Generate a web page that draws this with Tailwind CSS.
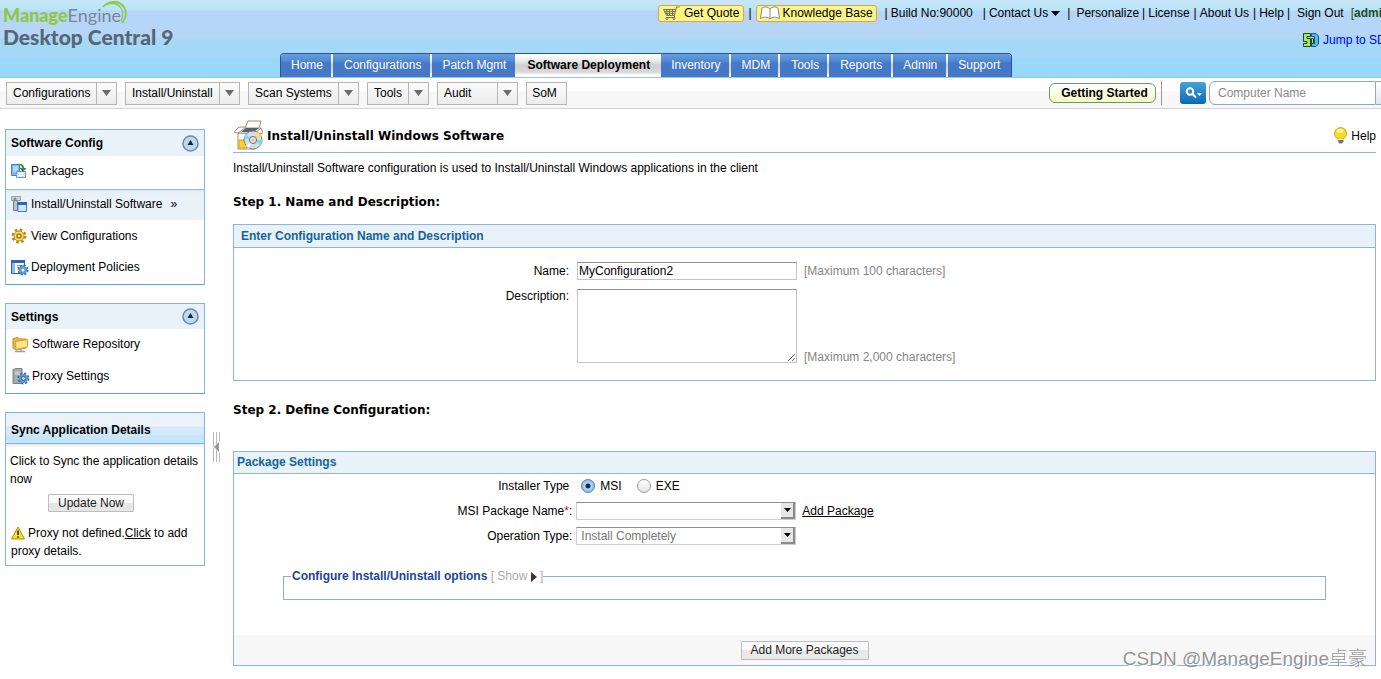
<!DOCTYPE html>
<html lang="en">
<head>
<meta charset="utf-8">
<title>Desktop Central 9 - Install/Uninstall Windows Software</title>
<script src="https://cdn.jsdelivr.net/npm/@tailwindcss/browser@4"></script>
</head>
<body class="relative min-h-screen overflow-x-hidden bg-white font-['Liberation_Sans',Arial,sans-serif] text-[12px] leading-[18px] text-black">

<header class="flex h-[78px] flex-col justify-between border-b border-[#90c6f8] bg-[linear-gradient(to_bottom,#c8e6fa_0px,#c4e6fa_4px,#b8e8f8_6px,#b8e6f8_10px,#b5d6f7_11px,#b5d6f7_37px,#a6d8f8_39px,#a4d8f8_58px,#98d8f8_60px,#98d8f8_78px)]">
  <div class="flex justify-between">
    <a href="#" class="relative flex flex-col pt-[7px] pl-[3px] font-['Lato','Open_Sans',sans-serif]">
      <span class="text-[18px] leading-[17px] text-[#7b8794]"><b class="font-black text-[#8fc742]">Manage</b>Engine</span>
      <span class="text-[21px] leading-[25px] font-black text-[#566672]">Desktop Central 9</span>
      <svg class="absolute top-0 left-[102px]" width="26" height="25" viewBox="0 0 26 25" fill="none" stroke="#8fc742"><path d="M1 7C7 0 18 0 22 7c3 5 2 11-2 16" stroke-width="1.600"/><path d="M4 5c7-4 14 0 16 5 1 3 1 7-1 11" stroke-width="1.200"/><path d="M8 3c8-2 15 3 16 9" stroke-width="1"/></svg>
    </a>
    <div class="w-[723px] overflow-hidden whitespace-nowrap">
      <nav class="flex h-[26px] items-center" aria-label="Account">
        <a href="#" class="flex h-[17px] items-center gap-1 rounded-[3px] border border-[#e0a050] bg-[#fbf588] pr-1 pl-1">
          <svg width="17" height="14" viewBox="0 0 17 14" fill="none" stroke="#77764a"><path d="M16.500 1h-3l-2 8.500h-8L.5 3.500h12M1.500 5.500h10.500M2.500 7.500h9M3.500 3.500l1 6M6.500 3.500v6M9.500 3.500v6M11 9.500l1 2H3"/><circle cx="4" cy="12.500" r="1"/><circle cx="11" cy="12.500" r="1"/></svg>Get Quote</a>
        <span class="px-1">|</span>
        <a href="#" class="flex h-[17px] items-center gap-[3px] rounded-[3px] border border-[#e0a050] bg-[#fbf588] px-[3px]">
          <svg width="20" height="14" viewBox="0 0 20 14" fill="#fff" stroke="#7f8c90"><path d="M10 3C8 .5 4 .5 2 2L.5 12.500C4 10.500 8 11 10 13c2-2 6-2.500 9.500-.5L18 2c-2-1.500-6-1.500-8 1zv10"/></svg>Knowledge Base</a>
        <span class="pr-[3px] pl-2">|</span><span>Build No:90000</span>
        <span class="pr-[3px] pl-[10px]">|</span>
        <a href="#" class="flex items-center gap-[3px]">Contact Us <svg width="9" height="5" viewBox="0 0 9 5"><path d="M0 0h9L4.500 5z"/></svg></a>
        <span class="pr-[6px] pl-[7px]">|</span><a href="#">Personalize</a>
        <span class="px-[3px]">|</span><a href="#">License</a>
        <span class="pr-[3px] pl-1">|</span><a href="#">About Us</a>
        <span class="pr-[3px] pl-1">|</span><a href="#">Help</a>
        <span class="pr-[7px] pl-[3px]">|</span><a href="#">Sign Out</a>
        <span class="pl-[7px] text-[#1d4d24]">[<b>admin</b>]</span>
      </nav>
      <a href="#" class="mt-[5px] ml-[645px] flex items-center gap-1 text-[#0000ee]">
        <svg class="shrink-0" width="16" height="14" viewBox="0 0 16 14"><path d="M.5.5h7v3H4v2h3.500v8h-7v-3H4v-2H.5z" fill="#b8e35c" stroke="#174b28"/><path d="M8.500.5H13l2.500 2.500v8L13 13.500H8.500v-3h3v-7h-3z" fill="#55b8f0" stroke="#1c4f86"/><path d="M8.500 5.500h2v5h-2z" fill="#b8e35c" stroke="#174b28"/></svg>Jump to SDP</a>
    </div>
  </div>
  <nav class="ml-[280px] flex h-6 w-fit gap-[2px] overflow-hidden rounded-t-[4px] border-x border-t border-[#2a559c] bg-[linear-gradient(to_bottom,#fff_0px,#ececec_7px,#cfcfcf_11px,#d8d8d8_18px,#fff_21px)] leading-[22px] whitespace-nowrap text-white" aria-label="Modules">
    <a href="#" class="bg-[linear-gradient(to_bottom,#689fe0_0px,#5088d4_7px,#4678c8_9px)] px-2 pl-[10px]">Home</a>
    <a href="#" class="bg-[linear-gradient(to_bottom,#689fe0_0px,#5088d4_7px,#4678c8_9px)] pr-[9px] pl-[11px]">Configurations</a>
    <a href="#" class="bg-[linear-gradient(to_bottom,#689fe0_0px,#5088d4_7px,#4678c8_9px)] pr-[9px] pl-[10px]">Patch Mgmt</a>
    <a href="#" class="pr-[9px] pl-[10px] font-bold text-black">Software Deployment</a>
    <a href="#" class="bg-[linear-gradient(to_bottom,#689fe0_0px,#5088d4_7px,#4678c8_9px)] pr-2 pl-[10px]">Inventory</a>
    <a href="#" class="bg-[linear-gradient(to_bottom,#689fe0_0px,#5088d4_7px,#4678c8_9px)] pr-2 pl-[11px]">MDM</a>
    <a href="#" class="bg-[linear-gradient(to_bottom,#689fe0_0px,#5088d4_7px,#4678c8_9px)] pr-2 pl-[11px]">Tools</a>
    <a href="#" class="bg-[linear-gradient(to_bottom,#689fe0_0px,#5088d4_7px,#4678c8_9px)] pr-[9px] pl-[11px]">Reports</a>
    <a href="#" class="bg-[linear-gradient(to_bottom,#689fe0_0px,#5088d4_7px,#4678c8_9px)] pr-[9px] pl-[10px]">Admin</a>
    <a href="#" class="bg-[linear-gradient(to_bottom,#689fe0_0px,#5088d4_7px,#4678c8_9px)] pr-[11px] pl-[10px]">Support</a>
  </nav>
</header>

<div class="flex h-[31px] items-center overflow-hidden border-b border-[#d4d4d4] bg-[linear-gradient(to_bottom,#fff_0px,#fff_13px,#f7f7f7_14px)] pl-[6px] whitespace-nowrap">
  <div class="flex h-[23px] gap-2 leading-[21px]">
    <button class="flex w-[111px] border border-[#b5b5b5] bg-linear-to-b from-[#fbfbfb] to-[#ececec]"><span class="grow pl-[6px] text-left">Configurations</span><span class="flex h-full w-5 items-center justify-center border-l border-[#b5b5b5]"><svg width="9" height="6" viewBox="0 0 9 6" fill="#6b6b6b"><path d="M0 0h9L4.500 6z"/></svg></span></button>
    <button class="flex w-[115px] border border-[#b5b5b5] bg-linear-to-b from-[#fbfbfb] to-[#ececec]"><span class="grow pl-[6px] text-left">Install/Uninstall</span><span class="flex h-full w-5 items-center justify-center border-l border-[#b5b5b5]"><svg width="9" height="6" viewBox="0 0 9 6" fill="#6b6b6b"><path d="M0 0h9L4.500 6z"/></svg></span></button>
    <button class="flex w-[111px] border border-[#b5b5b5] bg-linear-to-b from-[#fbfbfb] to-[#ececec]"><span class="grow pl-[6px] text-left">Scan Systems</span><span class="flex h-full w-5 items-center justify-center border-l border-[#b5b5b5]"><svg width="9" height="6" viewBox="0 0 9 6" fill="#6b6b6b"><path d="M0 0h9L4.500 6z"/></svg></span></button>
    <button class="flex w-[62px] border border-[#b5b5b5] bg-linear-to-b from-[#fbfbfb] to-[#ececec]"><span class="grow pl-[6px] text-left">Tools</span><span class="flex h-full w-5 items-center justify-center border-l border-[#b5b5b5]"><svg width="9" height="6" viewBox="0 0 9 6" fill="#6b6b6b"><path d="M0 0h9L4.500 6z"/></svg></span></button>
    <button class="flex w-[81px] border border-[#b5b5b5] bg-linear-to-b from-[#fbfbfb] to-[#ececec]"><span class="grow pl-[6px] text-left">Audit</span><span class="flex h-full w-5 items-center justify-center border-l border-[#b5b5b5]"><svg width="9" height="6" viewBox="0 0 9 6" fill="#6b6b6b"><path d="M0 0h9L4.500 6z"/></svg></span></button>
    <button class="w-[41px] border border-[#b5b5b5] bg-linear-to-b from-[#fbfbfb] to-[#ececec] pr-1">SoM</button>
  </div>
  <div class="ml-auto flex items-center">
    <button class="h-5 w-[107px] rounded-[6px] border border-[#5f9f68] bg-linear-to-b from-white to-[#fbf7c4] pl-1 font-bold">Getting Started</button>
    <span class="ml-[5px] h-6 border-l border-[#999]"></span>
    <button class="ml-[18px] flex h-[22px] w-[26px] items-center justify-center rounded-[3px] bg-linear-to-b from-[#45a3dc] to-[#0868b4]" aria-label="Search type"><svg width="17" height="12" viewBox="0 0 17 12" fill="none" stroke="#fff" stroke-width="2"><circle cx="5" cy="4.500" r="3.200"/><path d="M7.500 7l3.500 3.500"/><path d="M12 6h5L14.500 9z" fill="#fff" stroke="none"/></svg></button>
    <input type="text" aria-label="Computer Name" placeholder="Computer Name" class="ml-[3px] h-6 w-[167px] rounded-l-[6px] border border-[#8ba6c6] bg-white px-2 placeholder:text-[#8a8a8a]">
    <button class="h-6 w-[5px] border-y border-[#8ba6c6] bg-linear-to-b from-white to-[#dde5ee]" aria-label="Search"></button>
  </div>
</div>

<div class="flex items-start pr-[5px] pb-3 pl-[5px]">
  <aside class="mt-5 w-[200px] shrink-0">
    <section class="h-[156px] border border-[#7fb4e4] border-b-[#5aa6e0]">
      <h2 class="flex h-[26px] items-center justify-between bg-[#eaf2f9] px-[5px] font-bold">Software Config
        <button aria-label="Collapse Software Config"><svg width="17" height="17" viewBox="0 0 17 17"><circle cx="8.500" cy="8.500" r="7.500" fill="#b5dcf0" stroke="#7786a8" stroke-width="1.500"/><path d="M8.500 5l3 5h-6z" fill="#222"/></svg></button></h2>
      <a href="#" class="flex h-[30px] items-center gap-1 pl-[5px]"><svg width="16" height="16" viewBox="0 0 16 16"><path d="M.5 1.500h8v11h-8z" fill="#7fb5e6" stroke="#4d7ebd"/><path d="M2 4h5M2 6h5M2 8h4" stroke="#e8f3ff"/><path d="M5.500 8.500h9v6h-9z" fill="#cfe3f7" stroke="#6b9bd0"/><path d="M7 10.500h6M7 12.500h6M10 9v5" stroke="#fff"/><path d="M7 1c4-1 6 1 6 4h2.500L12 9 8.500 5H11c0-2-1-3-4-4z" fill="#2f8f2a"/></svg>Packages</a>
      <a href="#" aria-current="page" class="mt-[3px] flex h-[31px] items-center gap-1 border-t border-[#8fbbe6] bg-[linear-gradient(to_bottom,#dde4f4_0px,#eaf2f9_3px)] pb-[2px] pl-[5px]"><svg width="16" height="16" viewBox="0 0 16 16"><path d="M.5.5h9v4h-9z" fill="#d4d4d8" stroke="#9da1ae"/><path d="M2.500 4.500h4v10h-4z" fill="#b9c2d2" stroke="#70809c"/><circle cx="4" cy="3" r="1.500" fill="#6fa46b"/><path d="M7 6.500h8.500v9H7z" fill="#d4e6fa" stroke="#4a7dbd"/><path d="M6.500 6h9.500v3H6.500z" fill="#2d66b8"/></svg>Install/Uninstall Software <span class="pl-1">»</span></a>
      <a href="#" class="flex h-[31px] items-center gap-1 pl-[5px]"><svg width="16" height="16" viewBox="0 0 16 16"><circle cx="8" cy="8" r="6" fill="none" stroke="#b98516" stroke-width="3" stroke-dasharray="2.400 2.310"/><circle cx="8" cy="8" r="5" fill="#ffe065" stroke="#c18f1c"/><circle cx="8" cy="8" r="2" fill="#fff" stroke="#a1730c" stroke-width="1.500"/></svg>View Configurations</a>
      <a href="#" class="flex h-8 items-center gap-[2px] pl-[5px]"><svg width="18" height="17" viewBox="0 0 18 17"><path d="M.5 1.500h13v13H.5z" fill="#fff" stroke="#2d61aa"/><path d="M0 1h14v3H0z" fill="#2d66b8"/><path d="M1 4h3v10H1z" fill="#8cbdf0"/><path d="M6 6.500h7M6 8.500h7" stroke="#9ab"/><circle cx="12" cy="11" r="4.500" fill="none" stroke="#2e6cb3" stroke-width="2" stroke-dasharray="2 1.530"/><circle cx="12" cy="11" r="4" fill="#5b9bde"/><circle cx="12" cy="11" r="1.500" fill="#fff"/></svg>Deployment Policies</a>
    </section>

    <section class="mt-[18px] h-[91px] border border-[#7fb4e4] border-b-[#5aa6e0]">
      <h2 class="flex h-[25px] items-center justify-between bg-[#eaf2f9] px-[5px] font-bold">Settings
        <button aria-label="Collapse Settings"><svg width="17" height="17" viewBox="0 0 17 17"><circle cx="8.500" cy="8.500" r="7.500" fill="#b5dcf0" stroke="#7786a8" stroke-width="1.500"/><path d="M8.500 5l3 5h-6z" fill="#222"/></svg></button></h2>
      <a href="#" class="flex h-[30px] items-center gap-[3px] pl-[6px]"><svg width="17" height="17" viewBox="0 0 17 17"><path d="M1 2.500L6 1.500l1.500 1.500H14V12L4 14 1 12z" fill="#f0b93a" stroke="#c48d1d"/><path d="M3.500 5.500L15.500 3.500V11L4 13.500z" fill="#ffe58c" stroke="#d3a136"/><path d="M3 15.500h10M9 13v2" stroke="#8ba1bd" stroke-width="1.500"/></svg>Software Repository</a>
      <a href="#" class="flex h-[34px] items-center gap-[2px] pl-[6px]"><svg width="18" height="17" viewBox="0 0 18 17"><path d="M1 1.500L4 .5h6v15H1z" fill="#a4aaa9" stroke="#7d8582"/><path d="M3 4h5M3 6h5" stroke="#dfe3e2"/><circle cx="11.500" cy="10.500" r="5" fill="none" stroke="#2e6cb3" stroke-width="2" stroke-dasharray="2.200 1.720"/><circle cx="11.500" cy="10.500" r="4.500" fill="#5796dc"/><circle cx="11.500" cy="10.500" r="2" fill="#d9ecff" stroke="#2c63ac"/></svg>Proxy Settings</a>
    </section>

    <section class="mt-[18px] h-[154px] border border-[#7fb4e4]">
      <h2 class="flex h-[31px] items-center border-b border-[#7fb4e4] bg-[linear-gradient(to_bottom,#ebf2f9_0px,#ebf2f9_13px,#d8e8fa_14px,#d4e8fa_22px,#c5e5f8_23px)] pt-1 pl-[5px] font-bold">Sync Application Details</h2>
      <div class="bg-[linear-gradient(to_bottom,#e8e8e8_0px,#fff_4px)] pt-2 pl-1">
        <p>Click to Sync the application details now</p>
        <button class="mt-[6px] ml-[38px] block h-[18px] w-[86px] rounded-[1px] border border-[#bdbdbd] bg-[linear-gradient(to_bottom,#fafafa_50%,#e6e6e6_50%)] leading-4 text-[#222]">Update Now</button>
        <p class="mt-3 pl-[1px]"><svg class="mr-[3px] inline-block align-[-3px]" width="14" height="14" viewBox="0 0 14 14"><path d="M7 1l6.500 12H.5z" fill="#ffe11a" stroke="#a89012"/><path d="M7 4.500v4.500M7 10.200v1.600" stroke="#222" stroke-width="1.600"/></svg>Proxy not defined.<a href="#" class="underline">Click</a> to add proxy details.</p>
      </div>
    </section>
  </aside>

  <button class="mt-[323px] ml-2 shrink-0" aria-label="Collapse sidebar"><svg width="8" height="30" viewBox="0 0 8 30"><path d="M.5 0v30M3.500 0v30M6.500 0v30" stroke="#b8b8b8"/><path d="M0 15l7-6v12z" fill="#fff"/><path d="M1 15l5-5v10z" fill="#999"/></svg></button>

  <main class="ml-3 min-w-0 grow">
    <div class="flex h-[44px] items-center justify-between border-b border-[#8cb8e0] pt-[10px]">
      <h1 class="flex items-center gap-1 font-['DejaVu_Sans',Verdana,sans-serif] text-[12px] font-bold"><svg width="30" height="31" viewBox="0 0 30 31"><path d="M5 13v16h17V13z" fill="#fff" stroke="#ad8a72"/><path d="M6 20h8v8H6z" fill="#ffd21e" stroke="#d9a50e"/><path d="M5 13l7-5h16l-6 5zM12 8l3-7h13l-2 7M5 13l-4-1 5-5h6M28 8l2 5-7 1" fill="#fff" stroke="#ad8a72"/><path d="M8 12l5-4h13l-5 4z" fill="#59616b"/><circle cx="20" cy="20" r="9" fill="#d7dbe2" stroke="#7e8696"/><path d="M20 20l-9-2 1-4z" fill="#6fe3f5"/><path d="M20 20l5-8 3 4z" fill="#ffe44c"/><path d="M20 20l9 0-1 5z" fill="#6fe3f5"/><path d="M20 20l-4 8-3-2z" fill="#f6f9ff"/><circle cx="20" cy="20" r="3.500" fill="#f2f2f8" stroke="#5a5f86"/><circle cx="20" cy="20" r="1.500" fill="#ffb830"/></svg>Install/Uninstall Windows Software</h1>
      <a href="#" class="flex items-center gap-1"><svg width="13" height="17" viewBox="0 0 13 17"><circle cx="6.500" cy="6.500" r="6" fill="#fcd91a" stroke="#e0a20c"/><ellipse cx="6" cy="4" rx="3.500" ry="2" fill="#fff6b0"/><path d="M3.500 12.500h6v2l-1.500 2H5z" fill="#777"/><path d="M3.500 12.500h6" stroke="#eee"/></svg>Help</a>
    </div>
    <p class="mt-[6px]">Install/Uninstall Software configuration is used to Install/Uninstall Windows applications in the client</p>

    <h2 class="mt-4 font-['DejaVu_Sans',Verdana,sans-serif] text-[12px] font-bold">Step 1. Name and Description:</h2>
    <section class="mt-[13px] h-[157px] border border-[#8cb4dc]">
      <h3 class="h-[23px] border-b border-[#8cb4dc] bg-[#eaf2f9] pl-[7px] leading-[22px] font-bold text-[#12649a]">Enter Configuration Name and Description</h3>
      <div class="mt-[14px] grid grid-cols-[30%_220px_1fr] gap-y-[9px] pl-[1px]">
        <label for="name" class="pr-2 text-right">Name:</label>
        <input id="name" type="text" value="MyConfiguration2" class="h-[18px] border border-[#c4c4c4] border-t-[#8e8e8e] px-[1px]">
        <span class="pl-[7px] text-[#858585]">[Maximum 100 characters]</span>
        <label for="description" class="-mt-[2px] pr-2 text-right">Description:</label>
        <textarea id="description" class="h-[74px] resize border border-[#c4c4c4] border-t-[#8e8e8e]"></textarea>
        <span class="self-end pl-[7px] leading-3 text-[#858585]">[Maximum 2,000 characters]</span>
      </div>
    </section>

    <h2 class="mt-5 font-['DejaVu_Sans',Verdana,sans-serif] text-[12px] font-bold">Step 2. Define Configuration:</h2>
    <section class="mt-8 border border-[#8cb4dc]">
      <h3 class="h-[22px] border-b border-[#8cb4dc] bg-[#eaf2f9] pl-[3px] leading-[20px] font-bold text-[#12649a]">Package Settings</h3>
      <div class="mt-[3px] grid grid-cols-[30%_220px_1fr] gap-y-[7px]">
        <span class="pr-[7px] text-right" id="installer-type">Installer Type</span>
        <div class="flex items-center gap-[15px] pl-[5px]" role="radiogroup" aria-labelledby="installer-type">
          <label class="flex items-center gap-[5px]"><input type="radio" name="installer" checked class="h-[14px] w-[14px] appearance-none rounded-full border border-[#5a7fae] bg-[radial-gradient(circle,#132b4c_2px,#b4dafa_3px,#86bdf0_6px)]">MSI</label>
          <label class="flex items-center gap-[5px]"><input type="radio" name="installer" class="h-[14px] w-[14px] appearance-none rounded-full border border-[#999] bg-linear-to-b from-[#fff] to-[#e2e2e2]">EXE</label>
        </div>
        <span></span>
        <label for="package" class="pr-1 text-right">MSI Package Name<span class="text-red-600">*</span>:</label>
        <div class="relative h-[18px]">
          <select id="package" class="h-full w-full appearance-none border border-[#cfcfcf] border-t-[#8e8e8e] bg-white pl-1 leading-4"><option></option></select>
          <span class="pointer-events-none absolute top-[1px] right-[1px] flex h-4 w-[14px] items-center justify-center border-r-2 border-b-2 border-[#8a8a8a] bg-[#e6e6e6]"><svg width="7" height="4" viewBox="0 0 7 4"><path d="M0 0h7L3.500 4z"/></svg></span>
        </div>
        <a href="#" class="justify-self-start pl-[6px] underline">Add Package</a>
        <label for="operation" class="pr-1 text-right">Operation Type:</label>
        <div class="relative h-[18px]">
          <select id="operation" class="h-full w-full appearance-none border border-[#cfcfcf] border-t-[#8e8e8e] bg-white pl-1 leading-4 text-[#777]"><option>Install Completely</option></select>
          <span class="pointer-events-none absolute top-[1px] right-[1px] flex h-4 w-[14px] items-center justify-center border-r-2 border-b-2 border-[#8a8a8a] bg-[#e6e6e6]"><svg width="7" height="4" viewBox="0 0 7 4"><path d="M0 0h7L3.500 4z"/></svg></span>
        </div>
      </div>
      <fieldset class="mx-[49px] mt-[22px] h-[33px] border border-[#8cb0d4] pl-[7px]">
        <legend class="pl-[1px] text-[#aaa]"><b class="text-[#1c449c]">Configure Install/Uninstall options</b> <button>[ Show <svg class="inline-block" width="6" height="10" viewBox="0 0 6 10"><path d="M0 0l6 5-6 5z" fill="#4a2f28"/></svg> ]</button></legend>
      </fieldset>
      <div class="mt-[35px] flex h-[30px] items-center justify-center bg-[#f7f7f7]">
        <button class="h-[19px] w-[128px] rounded-[1px] border border-[#bdbdbd] bg-[linear-gradient(to_bottom,#fafafa_50%,#e9e9e9_50%)] leading-[17px] text-[#222]">Add More Packages</button>
      </div>
    </section>
  </main>
</div>

<div class="pointer-events-none absolute right-[14px] bottom-[6px] font-['Liberation_Sans','Noto_Sans_CJK_SC',sans-serif] text-[19px] leading-7 font-light whitespace-nowrap text-[#777]/80 [text-shadow:1px_1px_0_#fff]">CSDN @ManageEngine卓豪</div>
</body>
</html>
